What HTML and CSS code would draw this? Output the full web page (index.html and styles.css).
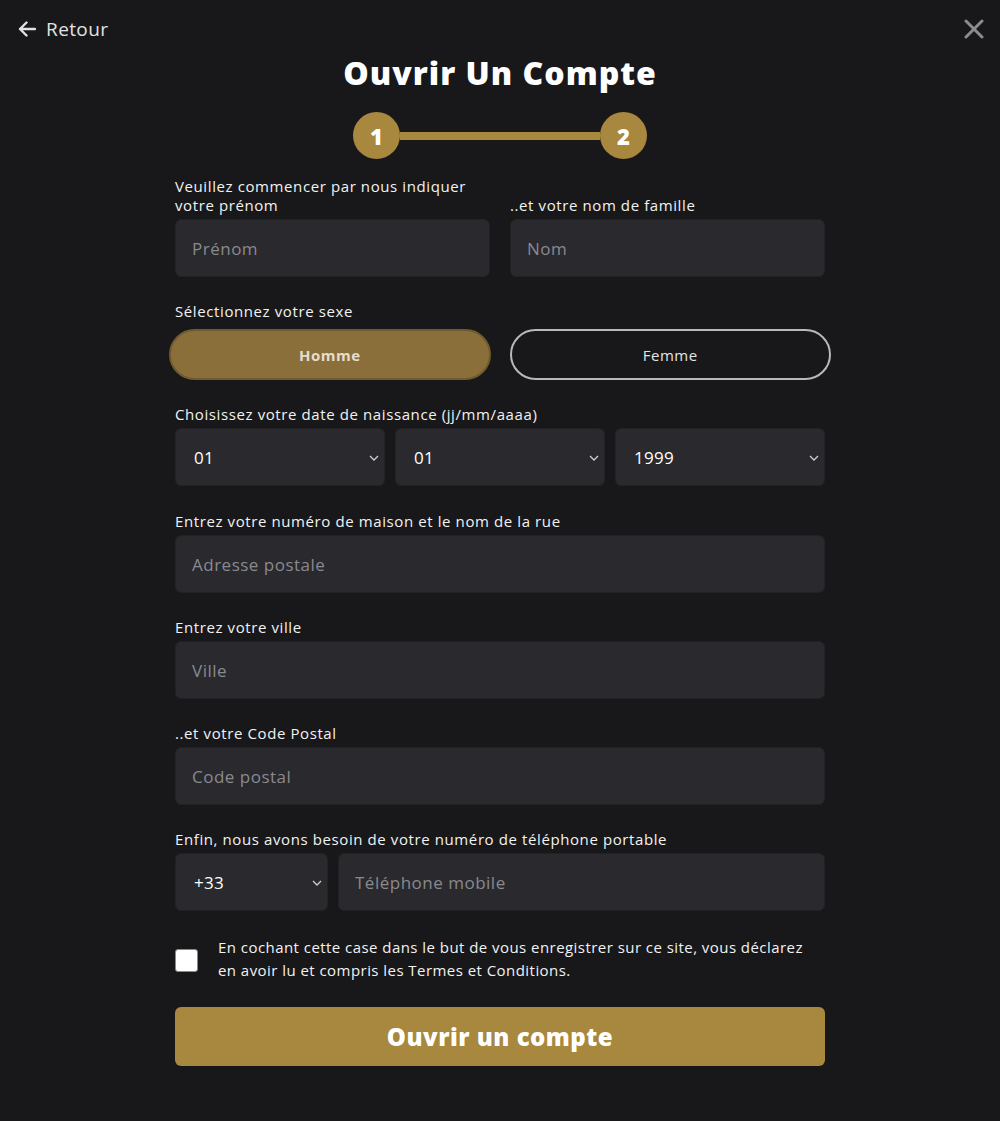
FILE: index.html
```html
<!DOCTYPE html>
<html lang="fr">
<head>
<meta charset="utf-8">
<title>Ouvrir Un Compte</title>
<link rel="stylesheet" href="styles.css">
</head>
<body>
<div class="topbar">
  <a class="back" href="#">
    <svg class="back-icon" width="18" height="16" viewBox="0 0 18 16"><path d="M17 8H2M8.5 1.5L2 8l6.5 6.5" fill="none" stroke="#e2e2e2" stroke-width="2.4" stroke-linecap="round" stroke-linejoin="round"/></svg>
    <span>Retour</span>
  </a>
  <a class="close" href="#">
    <svg width="20" height="20" viewBox="0 0 20 20"><path d="M2 2L18 18M18 2L2 18" stroke="#8c8c8c" stroke-width="3" stroke-linecap="round"/></svg>
  </a>
</div>
<h1 class="title">Ouvrir Un Compte</h1>
<div class="stepper">
  <div class="step">1</div>
  <div class="step-line"></div>
  <div class="step">2</div>
</div>
<form class="form">
  <div class="row two">
    <div class="field">
      <label class="label">Veuillez commencer par nous indiquer<br>votre prénom</label>
      <input class="input" type="text" placeholder="Prénom">
    </div>
    <div class="field">
      <label class="label">..et votre nom de famille</label>
      <input class="input" type="text" placeholder="Nom">
    </div>
  </div>
  <div class="group">
    <label class="label">Sélectionnez votre sexe</label>
    <div class="gender">
      <button type="button" class="pill active">Homme</button>
      <button type="button" class="pill">Femme</button>
    </div>
  </div>
  <div class="group">
    <label class="label">Choisissez votre date de naissance (jj/mm/aaaa)</label>
    <div class="date-row">
      <div class="select"><span>01</span><svg class="chev" width="10" height="6" viewBox="0 0 10 6"><path d="M1 1l4 4 4-4" fill="none" stroke="#d0d0d0" stroke-width="1.3"/></svg></div>
      <div class="select"><span>01</span><svg class="chev" width="10" height="6" viewBox="0 0 10 6"><path d="M1 1l4 4 4-4" fill="none" stroke="#d0d0d0" stroke-width="1.3"/></svg></div>
      <div class="select"><span>1999</span><svg class="chev" width="10" height="6" viewBox="0 0 10 6"><path d="M1 1l4 4 4-4" fill="none" stroke="#d0d0d0" stroke-width="1.3"/></svg></div>
    </div>
  </div>
  <div class="group address">
    <label class="label">Entrez votre numéro de maison et le nom de la rue</label>
    <input class="input" type="text" placeholder="Adresse postale">
  </div>
  <div class="group">
    <label class="label">Entrez votre ville</label>
    <input class="input" type="text" placeholder="Ville">
  </div>
  <div class="group">
    <label class="label">..et votre Code Postal</label>
    <input class="input" type="text" placeholder="Code postal">
  </div>
  <div class="group">
    <label class="label">Enfin, nous avons besoin de votre numéro de téléphone portable</label>
    <div class="phone-row">
      <div class="select"><span>+33</span><svg class="chev" width="10" height="6" viewBox="0 0 10 6"><path d="M1 1l4 4 4-4" fill="none" stroke="#d0d0d0" stroke-width="1.3"/></svg></div>
      <input class="input" type="text" placeholder="Téléphone mobile">
    </div>
  </div>
  <div class="terms">
    <span class="checkbox"></span>
    <p class="terms-text">En cochant cette case dans le but de vous enregistrer sur ce site, vous déclarez en avoir lu et compris les Termes et Conditions.</p>
  </div>
  <button type="button" class="submit">Ouvrir un compte</button>
</form>
</body>
</html>
```

FILE: styles.css
```css
* { box-sizing: border-box; }
html, body {
  margin: 0;
  background: #18181a;
  color: #ffffff;
  font-family: "Open Sans", "Liberation Sans", sans-serif;
}
body { min-height: 1121px; }

.topbar {
  height: 58px;
  display: flex;
  align-items: center;
  justify-content: space-between;
  padding: 0 16px 0 18px;
}
.back {
  display: flex;
  align-items: center;
  gap: 10px;
  color: #e2e2e2;
  text-decoration: none;
  font-size: 19px;
  letter-spacing: 0.4px;
}
.close { display: flex; }

.title {
  margin: -5px 0 0;
  text-align: center;
  font-size: 32px;
  line-height: 40px;
  font-weight: 800;
  letter-spacing: 1px;
}

.stepper {
  width: 294px;
  margin: 19px auto 0;
  display: flex;
  align-items: center;
}
.step {
  width: 47px;
  height: 47px;
  border-radius: 50%;
  background: #a8873f;
  color: #fff;
  font-weight: 800;
  font-size: 22px;
  display: flex;
  align-items: center;
  justify-content: center;
  flex: none;
}
.step-line {
  flex: 1;
  height: 8px;
  background: #a8873f;
}

.form {
  width: 650px;
  margin: 18px auto 0;
}
.row.two {
  display: grid;
  grid-template-columns: 1fr 1fr;
  gap: 20px;
}
.field {
  display: flex;
  flex-direction: column;
  justify-content: flex-end;
}
.group { margin-top: 25px; }
.group.address { margin-top: 26px; }
.label {
  display: block;
  font-size: 15px;
  line-height: 19px;
  margin-bottom: 4px;
  color: #f2f2f2;
  letter-spacing: 0.6px;
}
.input {
  display: block;
  width: 100%;
  height: 58px;
  border: 1px solid #222226;
  border-radius: 6px;
  background: #29292e;
  color: #fff;
  font-family: inherit;
  font-size: 17px;
  letter-spacing: 0.5px;
  padding: 0 16px;
  outline: none;
}
.input::placeholder { color: #8a8a8e; }

.gender {
  display: grid;
  grid-template-columns: 1fr 1fr;
  gap: 19px;
  margin: 0 -6px;
  padding-top: 4px;
}
.pill {
  height: 51px;
  border-radius: 26px;
  border: 2px solid #b9b9b9;
  background: transparent;
  color: #e4e4e4;
  font-family: inherit;
  font-size: 15px;
  letter-spacing: 0.5px;
}
.pill.active {
  background: #8a6f3a;
  border-color: #6f5b2f;
  color: #e6ddcc;
  font-weight: 700;
}

.date-row {
  display: grid;
  grid-template-columns: 1fr 1fr 1fr;
  gap: 10px;
}
.select {
  position: relative;
  height: 58px;
  border-radius: 6px;
  background: #29292e;
  border: 1px solid #222226;
  display: flex;
  align-items: center;
  padding: 0 18px;
  font-size: 17px;
  color: #fff;
  letter-spacing: 0.3px;
}
.chev {
  position: absolute;
  right: 5px;
  top: 26px;
}
.phone-row {
  display: grid;
  grid-template-columns: 153px 1fr;
  gap: 10px;
}

.terms {
  display: flex;
  align-items: center;
  gap: 20px;
  margin-top: 25px;
}
.checkbox {
  width: 23px;
  height: 23px;
  flex: none;
  background: #fff;
  border: 1px solid #8a8a8a;
  border-radius: 3px;
  margin-top: 2px;
}
.terms-text {
  margin: 0;
  font-size: 15px;
  line-height: 23px;
  color: #f2f2f2;
  letter-spacing: 0.45px;
}

.submit {
  display: block;
  width: 100%;
  height: 59px;
  margin-top: 25px;
  border: none;
  border-radius: 6px;
  background: #a8873f;
  color: #fff;
  font-family: inherit;
  font-weight: 800;
  font-size: 24px;
  letter-spacing: 0.5px;
}
```
